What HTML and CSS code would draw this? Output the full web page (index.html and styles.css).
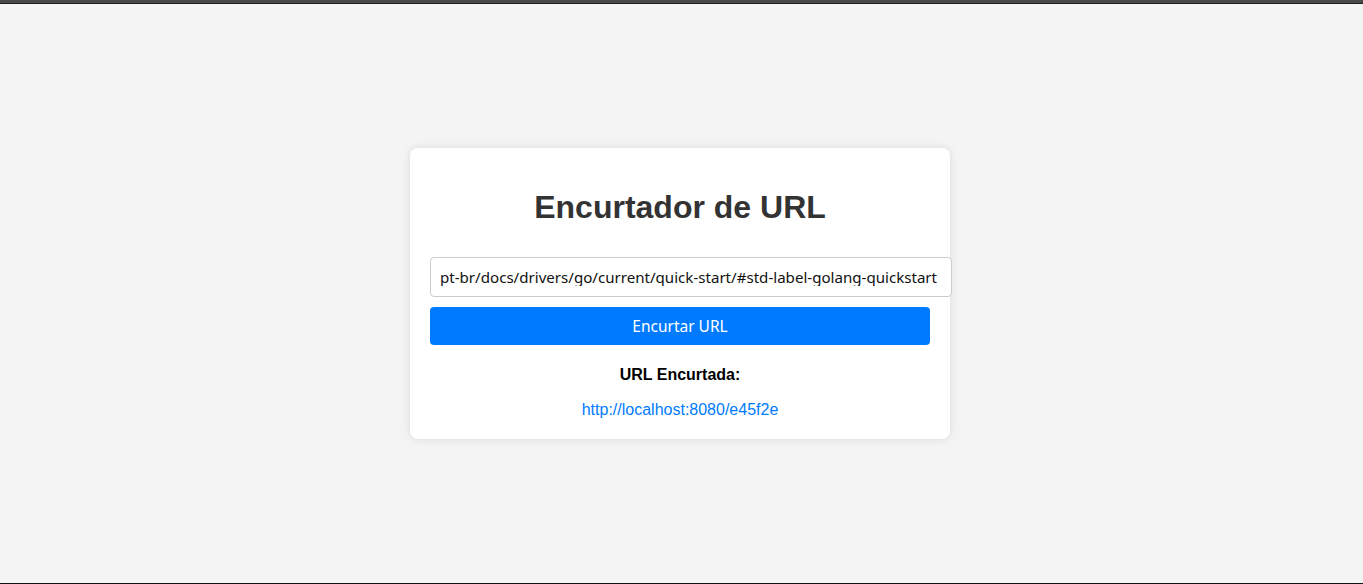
FILE: index.html
```html
<!DOCTYPE html>
<html lang="pt-br">
<head>
<meta charset="utf-8">
<title>Encurtador de URL</title>
<link rel="stylesheet" href="styles.css">
</head>
<body>
<div class="topbar"></div>
<main class="page">
  <div class="card">
    <h1 class="title">Encurtador de URL</h1>
    <form class="form">
      <input class="url-input" type="text" value="pt-br/docs/drivers/go/current/quick-start/#std-label-golang-quickstart">
      <button class="btn" type="button">Encurtar URL</button>
    </form>
    <div class="result">
      <p class="result-label">URL Encurtada:</p>
      <a class="result-link" href="#">http://localhost:8080/e45f2e</a>
    </div>
  </div>
</main>
<div class="bottomline"></div>
</body>
</html>
```
FILE: styles.css
```css
html, body {
  margin: 0;
  padding: 0;
  height: 100%;
}
body {
  background: #f4f4f4;
  font-family: "Liberation Sans", Arial, sans-serif;
  display: flex;
  flex-direction: column;
  overflow: hidden;
}
.topbar {
  height: 3px;
  background: #4a4a4a;
  border-bottom: 1px solid #1e1e1e;
  flex: none;
}
.bottomline {
  height: 1px;
  background: #111;
  flex: none;
}
.page {
  flex: 1;
  display: flex;
  align-items: center;
  justify-content: center;
  padding-right: 3px;
}
.card {
  width: 500px;
  padding: 20px;
  background: #fff;
  border-radius: 8px;
  box-shadow: 0 0 10px rgba(0, 0, 0, 0.1);
  text-align: center;
}
.title {
  font-size: 32px;
  font-weight: bold;
  color: #333;
  margin: 21px 0 31px;
  line-height: 37px;
}
.form {
  display: flex;
  flex-direction: column;
  align-items: flex-start;
  gap: 10px;
}
.url-input {
  width: 501px;
  padding: 10px 10px 10px 9px;
  border: 1px solid #ccc;
  border-radius: 4px;
  font-family: "Noto Sans", sans-serif;
  font-size: 15.1px;
  line-height: 18px;
  color: #111;
  background: #fff;
  margin: 0;
}
.btn {
  width: 500px;
  height: 38px;
  background: #007bff;
  color: #fff;
  border: none;
  border-radius: 4px;
  font-family: "Noto Sans", sans-serif;
  font-size: 15.5px;
  cursor: pointer;
  margin: 0;
}
.result {
  margin-top: 20px;
}
.result-label {
  margin: 0 0 16px;
  font-weight: bold;
  font-size: 16px;
  line-height: 19px;
  color: #000;
}
.result-link {
  color: #007bff;
  text-decoration: none;
  font-size: 16px;
  line-height: 19px;
  display: inline-block;
  vertical-align: top;
}
```
